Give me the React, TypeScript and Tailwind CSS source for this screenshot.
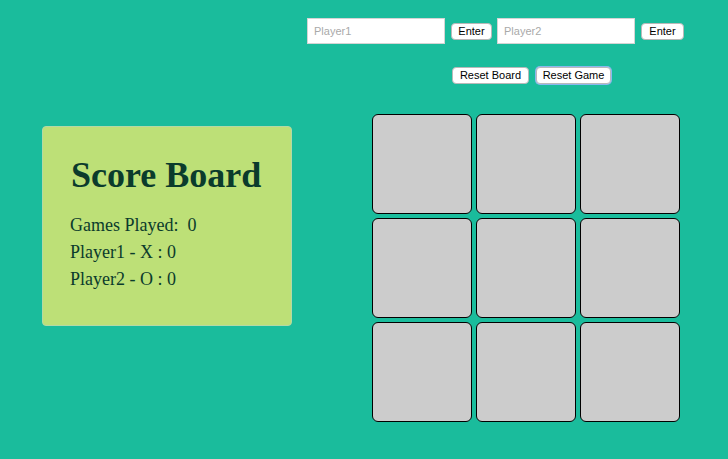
const btn =
  "h-[17px] rounded-[4px] border border-[#b9b9b9] bg-white px-[5px] text-[11px] leading-[15px] text-black font-['Liberation_Sans',Arial,sans-serif]";

const field =
  "h-[26px] w-[138px] border border-[#d4d4d4] bg-white pl-[6px] text-[11px] text-black placeholder:text-[#a9a9a9] font-['Liberation_Sans',Arial,sans-serif] outline-none";

export default function App() {
  const cells = Array.from({ length: 9 });
  return (
    <div className="min-h-screen w-full bg-[#1abc9c] pt-[18px]">
      {/* Players */}
      <div className="flex h-[26px] items-center pl-[307px]">
        <input placeholder="Player1" className={field} />
        <button className={`${btn} ml-[6px] w-[41px]`}>Enter</button>
        <input placeholder="Player2" className={`${field} ml-[5px]`} />
        <button className={`${btn} ml-[6px] w-[43px]`}>Enter</button>
      </div>

      {/* Reset */}
      <div className="mt-[23px] flex items-center gap-[6px] pl-[452px]">
        <button className={`${btn} w-[77px] h-[16px] leading-[14px]`}>Reset Board</button>
        <button className={`${btn} w-[75px] h-[16px] leading-[14px] ml-[1px] border-[#4a90e2] shadow-[0_0_0_1px_#8ab8ef]`}>
          Reset Game
        </button>
      </div>

      {/* Main */}
      <div className="mt-[30px] flex items-start pl-[42px]">
        <div className="mt-[12px] h-[200px] w-[250px] rounded-[4px] border border-[#b3d9a6] bg-[#bde077] px-[27px] pt-[28px] text-[#0b3b2c] font-['Liberation_Serif','Times_New_Roman',serif]">
          <h1 className="pl-[1px] text-[36px] font-bold leading-[40px]">Score Board</h1>
          <div className="mt-[17px] text-[18px] leading-[27px]">
            <p className="whitespace-pre">Games Played:  0</p>
            <p>Player1 - X : 0</p>
            <p>Player2 - O : 0</p>
          </div>
        </div>

        <div className="ml-[80px] grid grid-cols-[repeat(3,100px)] gap-[4px]">
          {cells.map((_, i) => (
            <div
              key={i}
              className="h-[100px] w-[100px] rounded-[6px] border border-black bg-[#cccccc]"
            />
          ))}
        </div>
      </div>
    </div>
  );
}
